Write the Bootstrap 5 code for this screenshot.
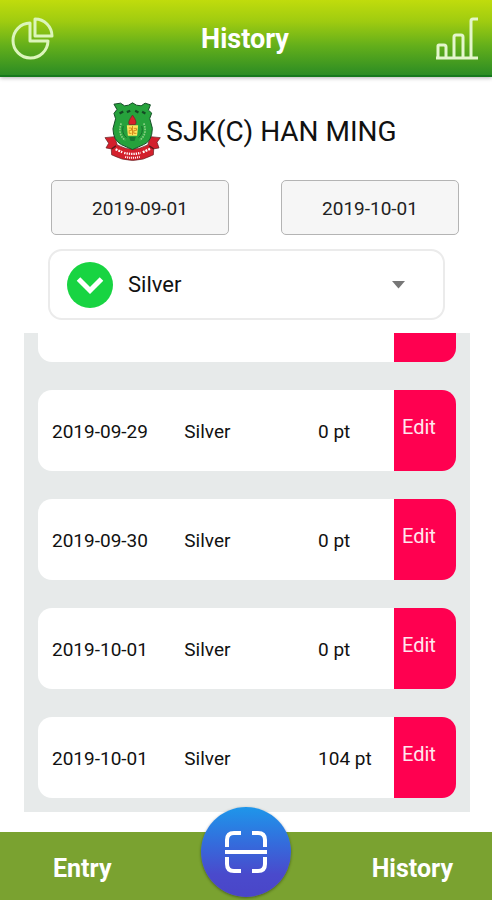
<!DOCTYPE html>
<html lang="en">
<head>
<meta charset="utf-8">
<meta name="viewport" content="width=device-width, initial-scale=1">
<title>History</title>
<link rel="stylesheet" href="https://cdn.jsdelivr.net/npm/bootstrap@5.3.0/dist/css/bootstrap.min.css">
<style>
body{font-family:Roboto,"Liberation Sans",sans-serif;font-size:19px;line-height:28px;color:#111}
.top-bar{height:77px;padding:3px 12px 0 10px;background:linear-gradient(#c0dc0c,#a0cc10 28%,#62ae1b 62%,#2c8c24);border-bottom:2px solid #15791c;box-shadow:0 1px 4px rgba(0,0,0,.3)}
.top-title{font-size:27px;line-height:32px}
.icon-btn{line-height:0}
.school{padding:25px 0 0 9px;gap:5px}
.school-name{font-size:28px;line-height:60px}
.dates{padding:18px 33px 0 51px;gap:52px}
.dates .form-control{height:55px;padding-bottom:4px;font-size:19px;background:#f6f6f6;border:1px solid #b4b4b4;border-radius:5px;color:#222}
.picker{height:71px;margin:14px 47px 0 48px;padding:0 38px 0 17px;gap:15px;border:2px solid #ebebeb;border-radius:14px}
.picker-select{font-size:22px;line-height:32px;appearance:none;color:#111}
.records{margin:13px 22px 20px 24px;padding:0 14px 14px;background:#e7eaea}
.record-table{table-layout:fixed;border-collapse:separate;border-spacing:0 28px;margin-bottom:-28px}
.record-table td{height:81px;padding:3px 0 0;background:#fff;vertical-align:middle;white-space:nowrap}
.record-table .col-date{width:35%;padding-left:14px;border-radius:14px 0 0 14px}
.record-table .col-kind{width:32%}
.record-table .col-edit{width:62px;padding:0;background:none}
.edit-btn{height:81px;padding:0 0 8px 8px;font-size:20px;background:#ff0050;color:#ffe6ee;border-radius:0 14px 14px 0}
.bottom-bar{height:68px;padding:6px 39px 0 53px;background:#7aa230}
.bottom-bar a{font-size:25px}
.scan-btn{top:-25px;width:90px;height:90px;background:linear-gradient(#1e96ea,#346cdc 40%,#4a4acc 75%,#4a46c8);box-shadow:0 1px 3px rgba(0,0,0,.4)}
</style>
<script src="https://cdn.jsdelivr.net/npm/bootstrap@5.3.0/dist/js/bootstrap.bundle.min.js"></script>
</head>
<body class="bg-white">
<div class="d-flex flex-column vh-100 overflow-hidden">
  <header class="top-bar d-flex justify-content-between align-items-center flex-shrink-0">
    <button type="button" class="icon-btn border-0 bg-transparent p-0" aria-label="Summary">
      <svg width="44" height="46" viewBox="0 0 44 46" fill="none" stroke="#dcf5bb" stroke-width="3" stroke-linejoin="round"><path d="M20 7A17.500 17.500 0 1 0 38 25H20Z"/><path d="M25 3V20H42A17 17 0 0 0 25 3Z"/></svg>
    </button>
    <h1 class="top-title text-white fw-bold m-0">History</h1>
    <button type="button" class="icon-btn border-0 bg-transparent p-0" aria-label="Statistics">
      <svg width="44" height="46" viewBox="0 0 44 46" fill="none" stroke="#e4f6cc" stroke-width="3" stroke-linejoin="round"><path d="M0 42H42M2 41V30Q2 29 3 29H8Q10 29 10 31V41M18 41V21Q18 19 20 19H25Q27 19 27 21V41M35 41V5Q35 3 37 3H42"/></svg>
    </button>
  </header>

  <main class="d-flex flex-column flex-grow-1 overflow-hidden">
    <div class="school d-flex justify-content-center align-items-center">
      <svg width="57" height="60" viewBox="30 36 172 180" role="img" aria-label="School crest">
        <path d="M33 143 62 140 70 165Q116 190 162 165L170 140 200 143 190 157 196 174 180 177 179 195Q117 229 53 195L52 177 36 174 44 160Z" fill="#d3202c" stroke="#5c1a1c" stroke-width="2"/>
        <path d="M53 177 66 168M180 177 166 168" stroke="#5c1a1c" stroke-width="4"/>
        <path d="M60 42 80 39 92 47 104 45 116 38 128 45 142 47 154 39 170 44 164 60 174 69 168 85 176 115Q175 154 150 164L116 179 82 164Q58 151 57 116L65 86 60 70 69 58Z" fill="#26a23c" stroke="#164d27" stroke-width="3" stroke-linejoin="round"/>
        <path d="M77 70 88 64M99 66 109 62M124 62 134 67M145 65 155 70" stroke="#144a24" stroke-width="7"/>
        <path d="M82 100Q70 132 94 151M150 100Q162 132 138 151" fill="none" stroke="#8bd184" stroke-width="5" stroke-dasharray="5 3"/>
        <path d="M88 108Q82 130 98 143M144 108Q150 130 134 143" fill="none" stroke="#176d2c" stroke-width="3"/>
        <path d="M116 75Q99 98 107 104H124Q132 96 116 75Z" fill="#d7202b" stroke="#711d22" stroke-width="2"/>
        <path d="M99 106H133L130 137H102Z" fill="#ffe45d"/>
        <path d="M105 114H113V121H106V130H113M120 115H128V121H120V130H128M116 108V135" stroke="#d58a1c" stroke-width="3" fill="none"/>
        <path d="M106 141H126L122 153H110Z" fill="#177831"/>
        <path d="M65 178 85 187M147 187 169 177" stroke="#fff" stroke-width="7" stroke-dasharray="6 3"/>
        <path d="M91 189Q116 195 141 189" fill="none" stroke="#fff" stroke-width="7" stroke-dasharray="4 3"/>
        <path d="M94 201Q116 207 138 201" fill="none" stroke="#fff" stroke-width="6" stroke-dasharray="3 3"/>
      </svg>
      <h2 class="school-name fw-normal m-0">SJK(C) HAN MING</h2>
    </div>

    <div class="dates d-flex">
      <input type="text" class="form-control text-center" aria-label="From date" value="2019-09-01">
      <input type="text" class="form-control text-center" aria-label="To date" value="2019-10-01">
    </div>

    <div class="picker d-flex align-items-center flex-shrink-0">
      <svg class="flex-shrink-0" width="46" height="46" viewBox="0 0 46 46" aria-hidden="true"><circle cx="23" cy="23" r="23" fill="#18d442"/><path d="M11.500 17 23 28.500 34.500 17" fill="none" stroke="#fff" stroke-width="5"/></svg>
      <select class="picker-select flex-grow-1 border-0 bg-transparent p-0" aria-label="Category"><option>Silver</option></select>
      <svg class="flex-shrink-0" width="13" height="8" viewBox="0 0 13 8" aria-hidden="true"><path d="M0 0H13L6.500 7.500Z" fill="#777"/></svg>
    </div>

    <section class="records d-flex flex-column justify-content-end flex-grow-1 overflow-hidden" aria-label="Records">
      <table class="record-table w-100">
        <tbody>
          <tr><td class="col-date">2019-09-28</td><td class="col-kind">Silver</td><td>0 pt</td><td class="col-edit"><button type="button" class="edit-btn border-0 w-100 d-block text-start">Edit</button></td></tr>
          <tr><td class="col-date">2019-09-29</td><td class="col-kind">Silver</td><td>0 pt</td><td class="col-edit"><button type="button" class="edit-btn border-0 w-100 d-block text-start">Edit</button></td></tr>
          <tr><td class="col-date">2019-09-30</td><td class="col-kind">Silver</td><td>0 pt</td><td class="col-edit"><button type="button" class="edit-btn border-0 w-100 d-block text-start">Edit</button></td></tr>
          <tr><td class="col-date">2019-10-01</td><td class="col-kind">Silver</td><td>0 pt</td><td class="col-edit"><button type="button" class="edit-btn border-0 w-100 d-block text-start">Edit</button></td></tr>
          <tr><td class="col-date">2019-10-01</td><td class="col-kind">Silver</td><td>104 pt</td><td class="col-edit"><button type="button" class="edit-btn border-0 w-100 d-block text-start">Edit</button></td></tr>
        </tbody>
      </table>
    </section>
  </main>

  <nav class="bottom-bar position-relative d-flex justify-content-between align-items-center flex-shrink-0" aria-label="Main">
    <a href="#entry" class="text-white fw-bold text-decoration-none">Entry</a>
    <button type="button" class="scan-btn position-absolute start-50 translate-middle-x border-0 rounded-circle p-0 d-flex justify-content-center align-items-center" aria-label="Scan">
      <svg width="44" height="44" viewBox="0 0 44 44" fill="none" stroke="#fff" stroke-width="4"><path d="M3 17V10Q3 3 10 3H17M28 3H34Q41 3 41 10V17M3 27V34Q3 41 10 41H17M28 41H34Q41 41 41 34V27M1 22H43"/></svg>
    </button>
    <a href="#history" class="text-white fw-bold text-decoration-none">History</a>
  </nav>
</div>
</body>
</html>
